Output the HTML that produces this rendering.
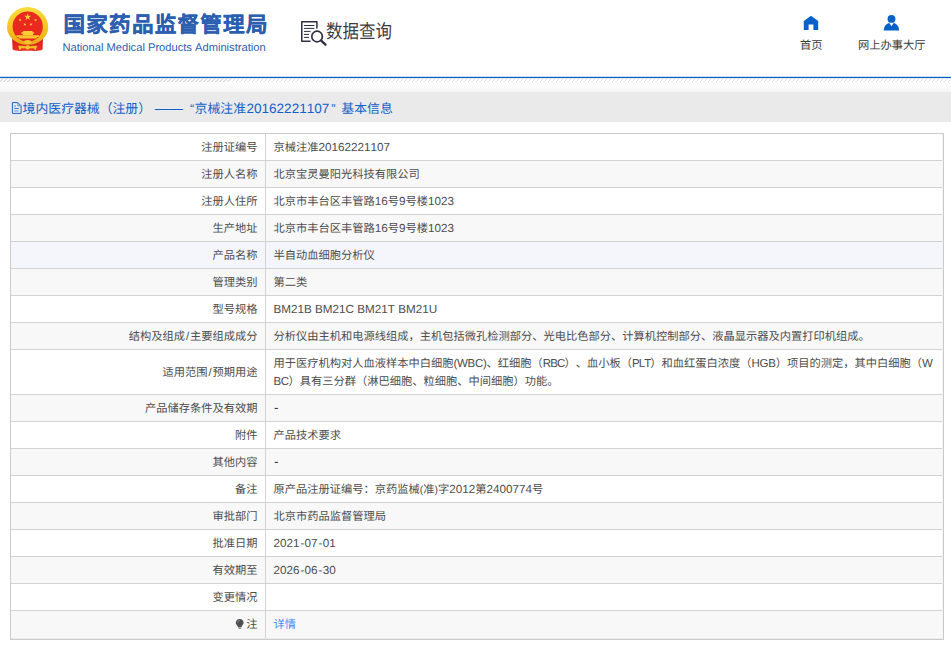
<!DOCTYPE html>
<html lang="zh-CN">
<head>
<meta charset="utf-8">
<title>数据查询</title>
<style>
*{box-sizing:border-box;margin:0;padding:0}
html,body{width:951px;height:649px;overflow:hidden;background:#fff}
body{font-family:"Liberation Sans",sans-serif;font-size:11.25px;color:#4d4d4d;position:relative;text-spacing-trim:space-all;font-kerning:none;text-rendering:geometricPrecision}
.hdr{position:absolute;left:0;top:0;width:951px;height:76px;background:#fff}
.line{position:absolute;left:0;top:76px;width:951px;height:3px;background:linear-gradient(#cfdff3 0,#cfdff3 1px,#0d5dc6 1px,#0d5dc6 2px,#e4edf9 2px,#e4edf9 3px)}
.hatch{position:absolute;left:0;top:78px;width:951px;height:4px;background:repeating-linear-gradient(135deg,rgba(255,255,255,0) 0,rgba(255,255,255,0) 2.03px,#e0e0e0 2.03px,#e0e0e0 2.83px)}
.shade{position:absolute;left:0;top:82px;width:951px;height:10px;background:linear-gradient(#fff,#f4f4f4)}
.bar{position:absolute;left:0;top:92px;width:951px;height:30px;background:#eaeaea}
.bar .t{position:absolute;left:22.6px;top:2px;line-height:30px;font-size:12.85px;color:#1161c8;white-space:nowrap}
.d{font-size:14.1px;margin-left:3.7px}
.ql{margin-left:7.1px;margin-right:0.3px}
.qr{margin-left:2.1px;margin-right:5.8px}
.e2{font-size:13.5px;margin-left:0.6px}
.logo{position:absolute;left:6px;top:6px;width:44px;height:47px}
.cn{position:absolute;left:63.5px;top:10.8px;font-size:21.5px;letter-spacing:1.3px;line-height:28px;font-weight:bold;color:#2d5fb1;white-space:nowrap;-webkit-text-stroke:0.3px #2d5fb1}
.en{position:absolute;left:62.5px;top:40.5px;font-size:11.15px;line-height:14px;color:#2d5fb1;white-space:nowrap}
.qi{position:absolute;left:300px;top:20px;width:28px;height:27px}
.q{position:absolute;left:326px;top:18px;font-size:16.5px;line-height:24px;color:#3c3c46;white-space:nowrap;transform:scaleY(1.15);transform-origin:0 0}
.nav{position:absolute;top:38px;font-size:11.25px;line-height:16px;color:#3a3a3a;white-space:nowrap;text-align:center}
.ni{position:absolute}
table{position:absolute;left:10px;top:133px;width:934px;border:1px solid #cbcbcb;border-collapse:separate;border-spacing:0;table-layout:fixed;font-size:11.25px;color:#4d4d4d}
td{border-bottom:1px solid #d2d2d2;height:27px;line-height:18px;padding:5.25px 7.5px 2.75px 7.5px;vertical-align:middle;word-break:break-all}
td.l{width:255px;text-align:right;border-right:1px solid #d2d2d2}
td.v{padding-right:5px}
tr:nth-child(even) td{background:#f8f8f8}
tr.h td{background:#f5f6fb}
tr:last-child td{height:28px;padding-top:4.5px;padding-bottom:3.5px;border-bottom:1px solid #ececec}
.rc{position:absolute;left:942px;top:134px;width:1px;height:505px;background:#f1f1f6}
.e,.c,.p,.e2,.d,.ql,.qr{line-height:0}
.e{font-size:11.7px}
.c{font-size:11.5px;letter-spacing:-0.5px}
.p{font-size:10.4px}
.s{padding:0 0.9px}
.hy{padding:0 0.3px 0 0.9px;line-height:0}
.h1{font-size:13.5px;line-height:0;padding-left:0.4px;position:relative;top:-0.4px;color:#3a3a3a}
a{color:#3f8cf5;text-decoration:none}
</style>
</head>
<body>
<div class="hdr">
<svg class="logo" viewBox="0 0 56 60" width="56" height="60" style="position:absolute;left:0;top:0;width:56px;height:60px">
<defs><linearGradient id="g1" x1="0" y1="0" x2="0" y2="1"><stop offset="0" stop-color="#fbdc3c"/><stop offset="0.55" stop-color="#f5c422"/><stop offset="1" stop-color="#eaa716"/></linearGradient>
<linearGradient id="g2" x1="0" y1="0" x2="0" y2="1"><stop offset="0" stop-color="#d81f18"/><stop offset="1" stop-color="#e8302a"/></linearGradient></defs>
<path d="M12.1 38.5 H43 L42.6 49.6 C39.6 51.2 35.2 51.3 32.2 50.7 H23 C20 51.3 15.6 51.2 12.6 49.6 Z" fill="url(#g2)"/>
<path d="M7 27.5 A20.6 20.6 0 0 1 48.2 27.5 A20.6 17.3 0 0 1 7 27.5 Z" fill="url(#g1)"/>
<circle cx="27.7" cy="26.5" r="15.1" fill="#e9291f"/>
<g fill="#f8d236"><polygon points="27.70,13.30 28.53,15.86 31.22,15.86 29.04,17.44 29.87,19.99 27.70,18.41 25.53,19.99 26.36,17.44 24.18,15.86 26.87,15.86"/><polygon points="20.95,18.43 20.69,19.64 21.76,20.25 20.53,20.38 20.28,21.59 19.78,20.46 18.55,20.59 19.46,19.76 18.96,18.64 20.03,19.25"/><polygon points="34.65,18.43 35.57,19.25 36.64,18.64 36.14,19.76 37.05,20.59 35.82,20.46 35.32,21.59 35.07,20.38 33.84,20.25 34.91,19.64"/><polygon points="25.10,22.73 25.27,23.95 26.48,24.16 25.37,24.70 25.55,25.93 24.69,25.04 23.58,25.58 24.16,24.49 23.30,23.60 24.52,23.82"/><polygon points="30.70,22.73 31.28,23.82 32.50,23.60 31.64,24.49 32.22,25.58 31.11,25.04 30.25,25.93 30.43,24.70 29.32,24.16 30.53,23.95"/></g>
<path d="M23.3 30.9 H32.2 L32.8 32.3 H34.1 L34.5 33.6 H33 V35.2 H22.6 V33.6 H21 L21.4 32.3 H22.7 Z" fill="#f7cd3a"/>
<path d="M16.2 35.3 H39.2 L38.6 36.9 H36.8 V38.4 H18.6 V36.9 H16.8 Z" fill="#f5c72c"/>
<ellipse cx="27.7" cy="41.9" rx="3.7" ry="2" fill="#f4c52a"/>
<path d="M27.6 45 L31.8 47.3 L27.6 49.8 L23.4 47.3 Z" fill="#f4c52a"/>
<path d="M24.8 46 L18 45.8 L19.6 50.6 L21.6 48.2 L24.6 48.6 Z M30.4 46 L37.2 45.8 L35.6 50.6 L33.6 48.2 L30.6 48.6 Z" fill="#f1c028"/>
</svg>
<svg viewBox="0 0 36 34" width="36" height="34" style="position:absolute;left:296px;top:16px">
<g fill="none" stroke="#2f2f43" stroke-linecap="round" stroke-linejoin="round">
<path d="M20.9 12 V5.75 H5.75 V25.2 H14" stroke-width="1.5"/>
<path d="M8.3 9.5 H18 M8.3 12.4 H18 M8.3 15.4 H14.2 M8.3 18.4 H12.7 M8.3 21.4 H12.7" stroke-width="1"/>
<circle cx="21.1" cy="20.5" r="5.3" stroke-width="1.7" fill="#fff"/>
<path d="M25.2 24.6 L29.5 28.7" stroke-width="2.3"/>
</g></svg>
<svg viewBox="0 0 30 24" width="30" height="24" style="position:absolute;left:796px;top:10px"><path d="M7.8 11.1 L15 5.85 L22.2 11.1 V20 H17.4 V14.6 H12.6 V20 H7.8 Z" fill="#0860c9"/></svg>
<svg viewBox="0 0 30 24" width="30" height="24" style="position:absolute;left:876px;top:10px"><g fill="#0860c9"><circle cx="15.5" cy="8.9" r="3.95"/><path d="M7.8 20.5 C7.9 16.6 10 13.6 13.3 12.95 L15.5 16.3 L17.7 12.95 C21 13.6 23 16.6 23.1 20.5 Z"/></g></svg>
  <div class="cn">国家药品监督管理局</div>
  <div class="en">National Medical Products Administration</div>
  <div class="q">数据查询</div>
  <div class="nav" style="left:800px">首页</div>
  <div class="nav" style="left:858px">网上办事大厅</div>
</div>
<div class="line"></div>
<div class="hatch"></div>
<div class="shade"></div>
<div class="bar"><svg viewBox="0 0 14 16" width="14" height="16" style="position:absolute;left:10px;top:8px"><g fill="none" stroke="#1a64c9" stroke-width="1"><path d="M2.4 2.6 H7.9 L11.1 5.8 V13.4 H2.4 Z"/><path d="M7.9 2.6 V5.8 H11.1" stroke="#4a86d8"/><path d="M4.2 6.1 H5.9 M4.2 8.5 H8.8" stroke="#3b7bd4"/><path d="M4.2 10.9 H8.8" stroke="#8fb2e4" stroke-width="1.6"/></g></svg><div class="t">境内医疗器械（注册）<span class="d">——</span><span class="ql">“</span>京械注准<span class="e2">20162221107</span><span class="qr">”</span>基本信息</div></div>
<table>
<tr><td class="l">注册证编号</td><td class="v">京械注准<span class="e">20162221107</span></td></tr>
<tr><td class="l">注册人名称</td><td class="v">北京宝灵曼阳光科技有限公司</td></tr>
<tr><td class="l">注册人住所</td><td class="v">北京市丰台区丰管路<span class="e">16</span>号<span class="e">9</span>号楼<span class="e">1023</span></td></tr>
<tr><td class="l">生产地址</td><td class="v">北京市丰台区丰管路<span class="e">16</span>号<span class="e">9</span>号楼<span class="e">1023</span></td></tr>
<tr class="h"><td class="l">产品名称</td><td class="v">半自动血细胞分析仪</td></tr>
<tr><td class="l">管理类别</td><td class="v">第二类</td></tr>
<tr><td class="l">型号规格</td><td class="v"><span class="e">BM21B BM21C BM21T BM21U</span></td></tr>
<tr><td class="l">结构及组成<span class="s">/</span>主要组成成分</td><td class="v">分析仪由主机和电源线组成，主机包括微孔检测部分、光电比色部分、计算机控制部分、液晶显示器及内置打印机组成。</td></tr>
<tr><td class="l">适用范围<span class="s">/</span>预期用途</td><td class="v">用于医疗机构对人血液样本中白细胞<span class="c" style="letter-spacing:-0.3px">(WBC)</span>、红细胞（<span class="c" style="letter-spacing:-0.83px">RBC</span>）、血小板（<span class="c" style="letter-spacing:-1px">PLT</span>）和血红蛋白浓度（<span class="c" style="letter-spacing:-0.2px">HGB</span>）项目的测定，其中白细胞（<span class="c">WBC</span>）具有三分群（淋巴细胞、粒细胞、中间细胞）功能。</td></tr>
<tr><td class="l">产品储存条件及有效期</td><td class="v"><span class="h1">-</span></td></tr>
<tr><td class="l">附件</td><td class="v">产品技术要求</td></tr>
<tr><td class="l">其他内容</td><td class="v"><span class="h1">-</span></td></tr>
<tr><td class="l">备注</td><td class="v">原产品注册证编号：京药监械<span class="p">(</span>准<span class="p">)</span>字<span class="e">2012</span>第<span class="e">2400774</span>号</td></tr>
<tr><td class="l">审批部门</td><td class="v">北京市药品监督管理局</td></tr>
<tr><td class="l">批准日期</td><td class="v"><span class="e">2021<span class="hy">-</span>07<span class="hy">-</span>01</span></td></tr>
<tr><td class="l">有效期至</td><td class="v"><span class="e">2026<span class="hy">-</span>06<span class="hy">-</span>30</span></td></tr>
<tr><td class="l">变更情况</td><td class="v"></td></tr>
<tr><td class="l">注</td><td class="v"><a>详情</a></td></tr>
</table>
<div class="rc"></div>
<svg viewBox="0 0 10 12" width="10" height="12" style="position:absolute;left:235px;top:618px"><path d="M4.7 0.9 C2.4 0.9 0.8 2.6 0.8 4.6 C0.8 6 1.6 6.9 2.3 7.8 C2.7 8.3 2.9 8.8 3 9.2 H6.4 C6.5 8.8 6.7 8.3 7.1 7.8 C7.8 6.9 8.6 6 8.6 4.6 C8.6 2.6 7 0.9 4.7 0.9 Z" fill="#4f4f52"/><path d="M3.2 9.6 H6.2 V10.3 L5.6 10.9 H3.8 L3.2 10.3 Z" fill="#8a8a8c"/><path d="M2.6 4.4 C2.7 3.4 3.5 2.7 4.5 2.6" stroke="#cfcfd6" stroke-width="0.6" fill="none"/></svg>
</body>
</html>
